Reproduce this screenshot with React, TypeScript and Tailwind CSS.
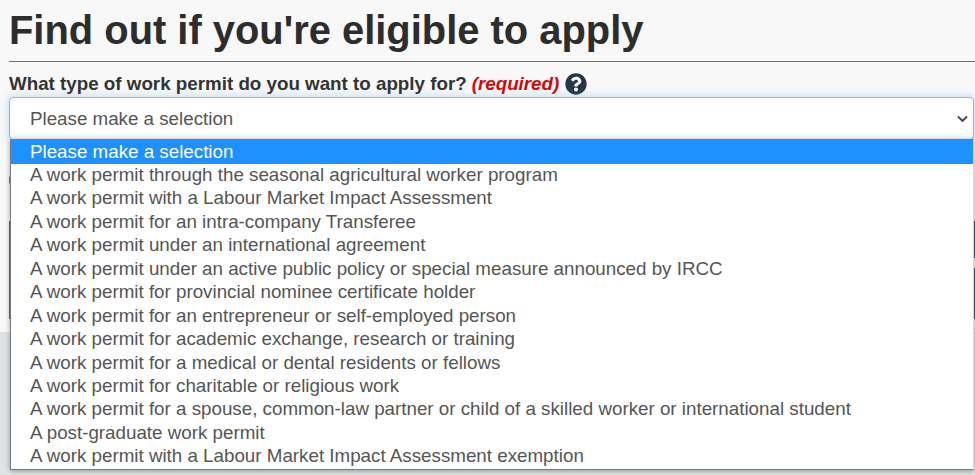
const options = [
  "A work permit through the seasonal agricultural worker program",
  "A work permit with a Labour Market Impact Assessment",
  "A work permit for an intra-company Transferee",
  "A work permit under an international agreement",
  "A work permit under an active public policy or special measure announced by IRCC",
  "A work permit for provincial nominee certificate holder",
  "A work permit for an entrepreneur or self-employed person",
  "A work permit for academic exchange, research or training",
  "A work permit for a medical or dental residents or fellows",
  "A work permit for charitable or religious work",
  "A work permit for a spouse, common-law partner or child of a skilled worker or international student",
  "A post-graduate work permit",
  "A work permit with a Labour Market Impact Assessment exemption",
];

function HelpIcon() {
  return (
    <svg className="ml-[6px] h-[22px] w-[22px] shrink-0" viewBox="0 0 512 512" fill="#26374a" aria-label="Help">
      <path d="M504 256c0 137-111 248-248 248S8 393 8 256 119 8 256 8s248 111 248 248zM262.700 90c-54.500 0-89.300 23-116.500 63.800-3.500 5.300-2.400 12.400 2.700 16.300l34.700 26.300c5.200 3.900 12.600 3 16.700-2.100 17.900-22.700 30.100-35.800 57.300-35.800 20.400 0 45.700 13.100 45.700 33 0 15-12.400 22.700-32.500 34C247.100 238.500 216 255 216 296v4c0 6.600 5.400 12 12 12h56c6.600 0 12-5.400 12-12v-1.300c0-28.500 83.200-29.600 83.200-106.700 0-58-60.200-102-116.500-102zM256 338c-25.400 0-46 20.600-46 46s20.600 46 46 46 46-20.600 46-46-20.600-46-46-46z" />
    </svg>
  );
}

function OptionList() {
  return (
    <ul className="absolute left-[10px] top-[139px] z-10 h-[331px] w-[964px] border border-[#777b80] border-r-[#d4d6d8] bg-white text-[18.77px] leading-[23.45px] text-[#555] shadow-[0_1px_5px_rgba(0,0,0,0.35)]">
      <li className="h-[24px] whitespace-nowrap bg-[#1e90ff] pl-[19px] leading-[24px] text-white">Please make a selection</li>
      {options.map((label) => (
        <li key={label} className="h-[23.45px] whitespace-nowrap pl-[19px] leading-[22px]">{label}</li>
      ))}
    </ul>
  );
}

export default function App() {
  return (
    <div className="relative flex h-[475px] w-[975px] flex-col overflow-hidden bg-[#f8f8f8] font-['Liberation_Sans',Arial,sans-serif]">
      <h1 className="ml-[9px] h-[62px] shrink-0 whitespace-nowrap border-b border-b-[#b5525d] text-[39.900px] font-bold leading-[61px] text-[#2d2d2d]">
        Find out if you're eligible to apply
      </h1>
      <div className="flex h-[35px] shrink-0 items-center pl-[9px] pt-[9px] text-[18.780px] font-bold text-[#333]">
        <span className="whitespace-nowrap">What type of work permit do you want to apply for?</span>
        <em className="ml-[5px] whitespace-nowrap text-[#d3080c]">(required)</em>
        <HelpIcon />
      </div>
      <div className="ml-[9px] flex h-[43px] w-[965px] shrink-0 items-center justify-between rounded-[4px] border border-[#7dbcec] bg-white pl-[20px] pr-[5px] text-[18.75px] text-[#555] shadow-[inset_0_-4px_6px_rgba(0,0,0,0.04),0_0_9px_rgba(102,175,233,0.45)]">
        <span className="pt-px">Please make a selection</span>
        <svg className="h-[8px] w-[11px]" viewBox="0 0 11 8" fill="none" stroke="#444" strokeWidth="1.9">
          <path d="M1 1.500 5.500 6 10 1.500" />
        </svg>
      </div>
      <div className="flex h-[192px] shrink-0 flex-col">
        <div className="ml-[9px] mt-[34px] h-[12px] w-[5px] rounded-l-sm border border-[#777] bg-white" />
        <div className="mt-[35px] flex h-[98px] justify-between">
          <div className="ml-[9px] w-[3px] bg-[#656b70]" />
          <div className="flex w-px flex-col gap-[10px]">
            <div className="h-[37px] bg-[#28618f]" />
            <div className="h-[51px] bg-[#28618f]" />
          </div>
        </div>
      </div>
      <div className="flex-1 bg-[#dfe3e4]" />
      <OptionList />
    </div>
  );
}
